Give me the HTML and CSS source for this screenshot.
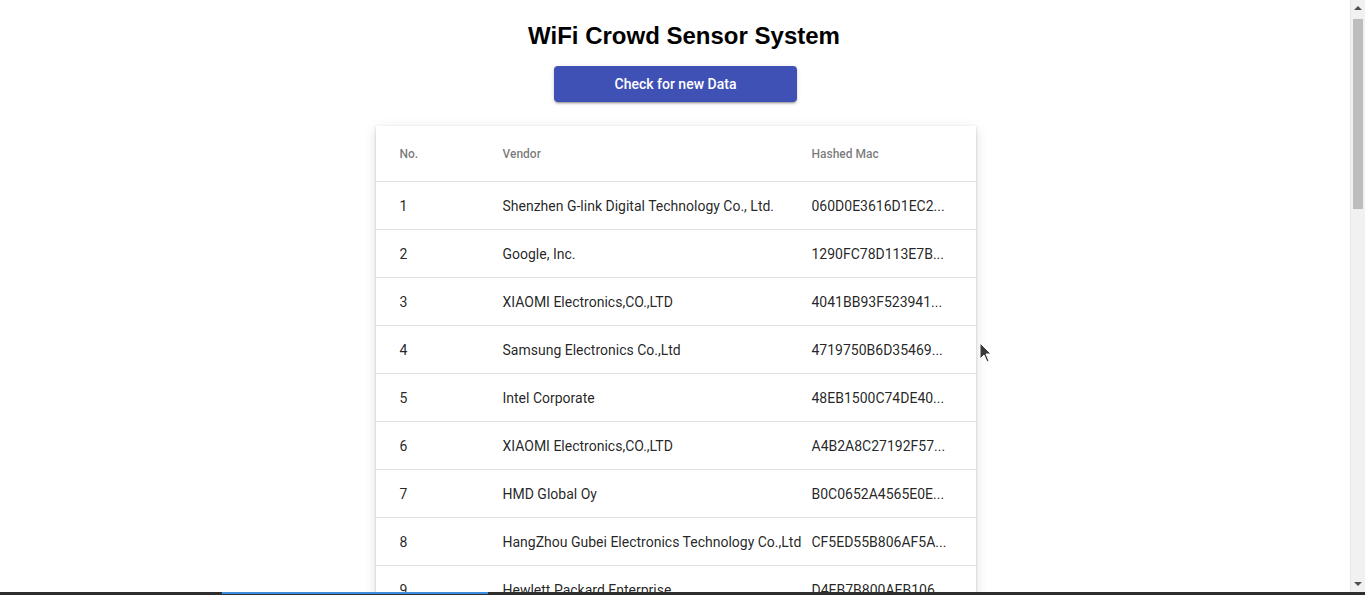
FILE: index.html
```html
<!DOCTYPE html>
<html lang="en">
<head>
<meta charset="utf-8">
<title>WiFi Crowd Sensor System</title>
<link rel="stylesheet" href="styles.css">
</head>
<body>
<main class="page">
  <h1 class="title">WiFi Crowd Sensor System</h1>
  <button class="check-btn" type="button">Check for new Data</button>
  <section class="card">
    <div class="row head">
      <div class="cell">No.</div>
      <div class="cell">Vendor</div>
      <div class="cell">Hashed Mac</div>
    </div>
    <div class="row"><div class="cell">1</div><div class="cell">Shenzhen G-link Digital Technology Co., Ltd.</div><div class="cell">060D0E3616D1EC2...</div></div>
    <div class="row"><div class="cell">2</div><div class="cell">Google, Inc.</div><div class="cell">1290FC78D113E7B...</div></div>
    <div class="row"><div class="cell">3</div><div class="cell">XIAOMI Electronics,CO.,LTD</div><div class="cell">4041BB93F523941...</div></div>
    <div class="row"><div class="cell">4</div><div class="cell">Samsung Electronics Co.,Ltd</div><div class="cell">4719750B6D35469...</div></div>
    <div class="row"><div class="cell">5</div><div class="cell">Intel Corporate</div><div class="cell">48EB1500C74DE40...</div></div>
    <div class="row"><div class="cell">6</div><div class="cell">XIAOMI Electronics,CO.,LTD</div><div class="cell">A4B2A8C27192F57...</div></div>
    <div class="row"><div class="cell">7</div><div class="cell">HMD Global Oy</div><div class="cell">B0C0652A4565E0E...</div></div>
    <div class="row"><div class="cell">8</div><div class="cell">HangZhou Gubei Electronics Technology Co.,Ltd</div><div class="cell">CF5ED55B806AF5A...</div></div>
    <div class="row"><div class="cell">9</div><div class="cell">Hewlett Packard Enterprise</div><div class="cell">D4EB7B800AEB106...</div></div>
  </section>
</main>
<div class="scrollbar" aria-hidden="true">
  <span class="scroll-arrow up"></span>
  <span class="scroll-thumb"></span>
  <span class="scroll-arrow down"></span>
</div>
<div class="taskbar"><span class="taskbar-active"></span></div>
<svg class="cursor" width="14" height="22" viewBox="0 0 14 22" aria-hidden="true">
  <path d="M1 1 L1 17 L5 13 L8 20 L10 19 L7 12 L12 12 Z" fill="#3a3a3a" stroke="#ffffff" stroke-width="1"/>
</svg>
</body>
</html>
```

FILE: styles.css
```css
html, body {
  margin: 0;
  padding: 0;
  background: #ffffff;
}

body {
  font-family: Roboto, "Helvetica Neue", sans-serif;
  color: rgba(0, 0, 0, 0.87);
  overflow: hidden;
  height: 595px;
}

.page {
  display: flex;
  flex-direction: column;
  align-items: center;
  padding: 20px 15px 40px 0;
}

.title {
  font-family: "Liberation Sans", Arial, sans-serif;
  font-weight: 700;
  font-size: 24px;
  line-height: 32px;
  margin: 0 0 14px 18px;
  color: #000;
}

.check-btn {
  width: 243px;
  height: 36px;
  border: none;
  border-radius: 4px;
  background: #3f51b5;
  color: #fff;
  font-family: Roboto, sans-serif;
  font-size: 14px;
  font-weight: 500;
  box-shadow: 0 3px 1px -2px rgba(0,0,0,.2), 0 2px 2px 0 rgba(0,0,0,.14), 0 1px 5px 0 rgba(0,0,0,.12);
  margin: 0 0 24px 1px;
  cursor: pointer;
}

.card {
  width: 600px;
  background: #fff;
  box-shadow: 0 2px 1px -1px rgba(0,0,0,.2), 0 1px 1px 0 rgba(0,0,0,.14), 0 1px 3px 0 rgba(0,0,0,.12), 0 3px 12px rgba(0,0,0,.12);
  margin-left: 1px;
}

.row {
  display: grid;
  grid-template-columns: 103px 309px 1fr;
  align-items: center;
  height: 47px;
  padding: 0 24px;
  border-bottom: 1px solid #e0e0e0;
  font-size: 14px;
}

.row.head {
  height: 55px;
  font-size: 12px;
  font-weight: 500;
  color: rgba(0, 0, 0, 0.54);
}

.cell {
  white-space: nowrap;
}

.scrollbar {
  position: fixed;
  top: 0;
  right: 0;
  width: 15px;
  height: 595px;
  background: #f1f1f1;
  border-left: 1px solid #e8e8e8;
  box-sizing: border-box;
}

.scroll-thumb {
  position: absolute;
  left: 2px;
  right: 2px;
  top: 19px;
  height: 190px;
  background: #bdbdbd;
}

.scroll-arrow {
  position: absolute;
  left: 3px;
  width: 0;
  height: 0;
  border-left: 4px solid transparent;
  border-right: 4px solid transparent;
}

.scroll-arrow.up {
  top: 6px;
  border-bottom: 4px solid #505050;
}

.scroll-arrow.down {
  top: 582px;
  border-top: 4px solid #505050;
}

.taskbar {
  position: fixed;
  left: 0;
  right: 0;
  bottom: 0;
  height: 3px;
  background: #2e2e2e;
}

.taskbar-active {
  position: absolute;
  left: 222px;
  width: 266px;
  top: 0;
  height: 2px;
  background: #3d8ee0;
}

.cursor {
  position: fixed;
  left: 979px;
  top: 342px;
}
```
